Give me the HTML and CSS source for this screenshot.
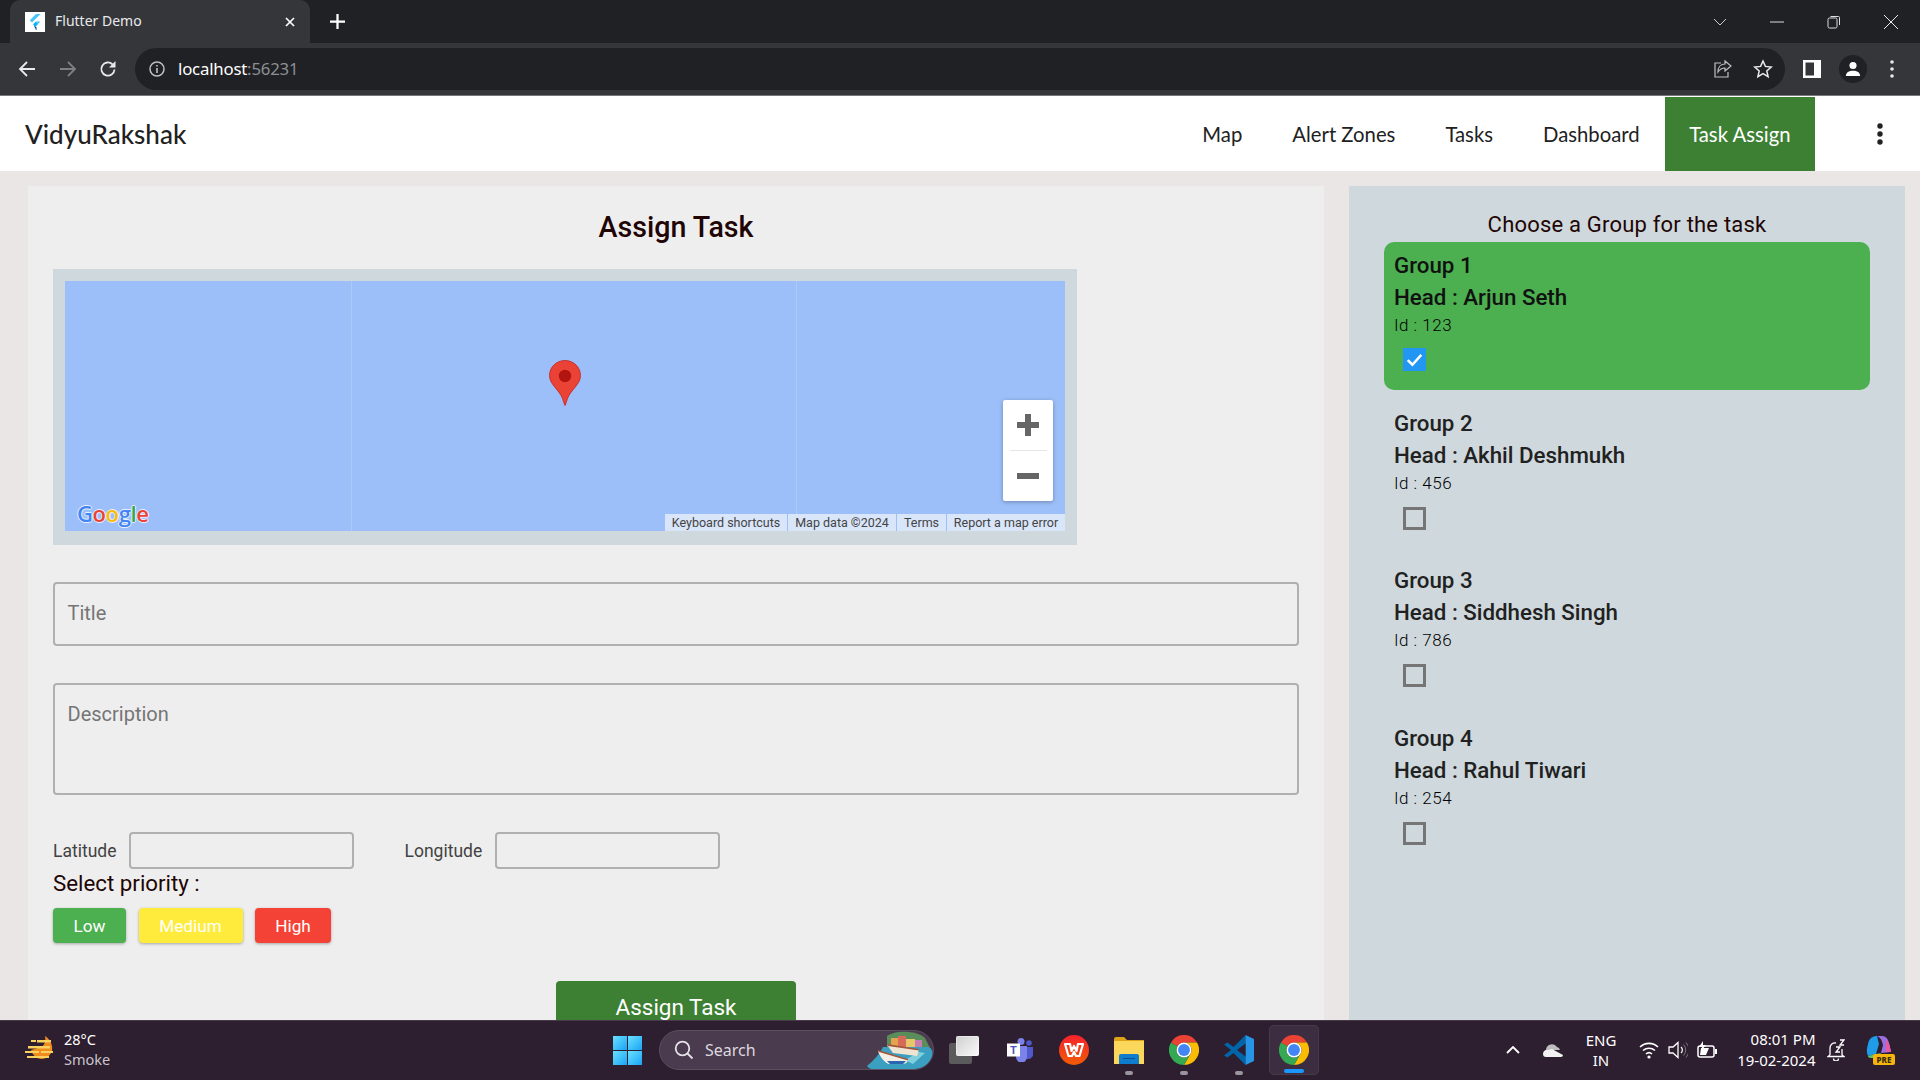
FILE: index.html
```html
<!DOCTYPE html>
<html lang="en">
<head>
  <meta charset="UTF-8">
  <meta name="viewport" content="width=device-width, initial-scale=1.0">
  <title>Flutter Demo</title>
  <link rel="stylesheet" href="styles.css">
</head>
<body>

<svg class="defs" width="0" height="0">
  <symbol id="chrome" viewBox="0 0 48 48">
    <path fill="#ea4335" d="M3.2 12A24 24 0 0 1 44.8 12H24A12 12 0 0 0 13.6 18Z"/>
    <path fill="#fbbc04" d="M44.8 12A24 24 0 0 1 24 48L34.4 30A12 12 0 0 0 24 12Z"/>
    <path fill="#34a853" d="M24 48A24 24 0 0 1 3.2 12L13.6 18A12 12 0 0 0 34.4 30Z"/>
    <circle cx="24" cy="24" r="12" fill="#fff"/>
    <circle cx="24" cy="24" r="9.5" fill="#4285f4"/>
  </symbol>
</svg>

<!-- browser window -->
<div class="tabstrip">
  <div class="tab">
    <svg class="favicon" viewBox="0 0 20 20">
      <rect width="20" height="20" fill="#fff"/>
      <path fill="#47c5fb" d="M11 2h4.500L7 10.500 4.800 8.300z"/>
      <path fill="#47c5fb" d="M11 9.500h4.500L10.500 14.500 8.300 12.200z"/>
      <path fill="#00569e" d="M8.300 12.200l2.200 2.200 1 1 .1 2.600H11z"/>
      <path fill="#00b5f8" d="M8.300 12.200l2.200-2.200 2.100 2.200-2.100 2.200z"/>
    </svg>
    <span class="tab-title">Flutter Demo</span>
    <svg class="tab-close" viewBox="0 0 10 10"><path d="M1 1l8 8M9 1l-8 8" stroke="#fff" stroke-width="1.700"/></svg>
  </div>
  <svg class="new-tab" viewBox="0 0 16 16"><path d="M8 0v16M0 8h16" stroke="#fff" stroke-width="2.400"/></svg>
  <div class="win-controls">
    <svg viewBox="0 0 14 14"><path d="M1 4l6 6 6-6" fill="none" stroke="#ccc"/></svg>
    <svg viewBox="0 0 14 14"><path d="M0 7h14" stroke="#ddd"/></svg>
    <svg viewBox="0 0 14 14"><rect x="1" y="3" width="9" height="10" rx="1.500" fill="none" stroke="#ddd"/><path d="M3.500 1.500h8a1 1 0 0 1 1 1V10" fill="none" stroke="#ddd"/></svg>
    <svg viewBox="0 0 14 14"><path d="M0 0l14 14M14 0L0 14" stroke="#eee"/></svg>
  </div>
</div>

<div class="toolbar">
  <svg class="tool-icon" viewBox="0 0 18 18"><path d="M17 9H2M9 2L2 9l7 7" fill="none" stroke="#e8eaed" stroke-width="1.800"/></svg>
  <svg class="tool-icon" viewBox="0 0 18 18"><path d="M1 9h15M9 2l7 7-7 7" fill="none" stroke="#7d7f83" stroke-width="1.800"/></svg>
  <svg class="tool-icon" viewBox="0 0 18 18"><path d="M15.500 9.500a6.600 6.600 0 1 1-2-5.200" fill="none" stroke="#e8eaed" stroke-width="1.800"/><path d="M16.500 1v6.500H10z" fill="#e8eaed"/></svg>
  <div class="omnibox">
    <svg class="info" viewBox="0 0 16 16"><circle cx="8" cy="8" r="7" fill="none" stroke="#bdc1c6" stroke-width="1.500"/><path d="M8 7v5M8 4v1.600" stroke="#bdc1c6" stroke-width="1.600"/></svg>
    <span class="url">localhost<span class="url-port">:56231</span></span>
    <svg class="omni-icon share" viewBox="0 0 20 20"><path d="M8 4H2v14h13v-5" fill="none" stroke="#bdc1c6" stroke-width="1.200"/><path d="M12 2l6 5-6 5V9c-3 0-5 1-7 4 0-5 3-8 7-8z" fill="none" stroke="#bdc1c6" stroke-width="1.200"/></svg>
    <svg class="omni-icon" viewBox="0 0 20 20"><path d="M10 2l2.400 5.400 5.800.6-4.400 3.900 1.300 5.800L10 14.700l-5.100 3 1.300-5.800L1.800 8l5.800-.6z" fill="none" stroke="#e8eaed" stroke-width="1.500"/></svg>
  </div>
  <svg class="panel-icon" viewBox="0 0 18 18"><path fill="#fff" fill-rule="evenodd" d="M0 0h18v18H0zM2.500 2.500v13H11v-13z"/></svg>
  <div class="profile">
    <svg viewBox="0 0 18 18"><circle cx="9" cy="5" r="4" fill="#fff"/><path fill="#fff" d="M1 17c0-4 3.500-6 8-6s8 2 8 6z"/></svg>
  </div>
  <svg class="chrome-menu" viewBox="0 0 4 18"><circle cx="2" cy="2" r="1.800" fill="#e8eaed"/><circle cx="2" cy="9" r="1.800" fill="#e8eaed"/><circle cx="2" cy="16" r="1.800" fill="#e8eaed"/></svg>
</div>

<!-- flutter app -->
<header class="appbar">
  <div class="brand">VidyuRakshak</div>
  <nav class="nav">
    <a class="nav-item">Map</a>
    <a class="nav-item">Alert Zones</a>
    <a class="nav-item">Tasks</a>
    <a class="nav-item">Dashboard</a>
    <a class="nav-item active">Task Assign</a>
  </nav>
  <svg class="kebab" viewBox="0 0 6 22"><circle cx="3" cy="3" r="2.700" fill="#212121"/><circle cx="3" cy="11" r="2.700" fill="#212121"/><circle cx="3" cy="19" r="2.700" fill="#212121"/></svg>
</header>

<main class="page">
  <section class="form-panel">
    <h1 class="form-title">Assign Task</h1>

    <div class="map-frame">
      <div class="map">
        <span class="map-seam seam-a"></span>
        <span class="map-seam seam-b"></span>
        <svg class="pin" viewBox="0 0 32 46">
          <path fill="#ea4335" stroke="#c5221f" stroke-width=".8" d="M16 .5C7.500.5.500 7 .5 15.500c0 9 9.500 14 13 23 .8 2 1.200 4.500 2.500 7 1.300-2.500 1.700-5 2.500-7 3.500-9 13-14 13-23C31.500 7 24.500.5 16 .5z"/>
          <circle cx="16" cy="16" r="6.200" fill="#b3140f"/>
        </svg>
        <div class="zoom-ctl">
          <svg class="zoom-btn" viewBox="0 0 22 22"><path d="M11 0v22M0 11h22" stroke="#666" stroke-width="6"/></svg>
          <span class="zoom-sep"></span>
          <svg class="zoom-btn" viewBox="0 0 22 22"><path d="M0 11h22" stroke="#666" stroke-width="6"/></svg>
        </div>
        <div class="google-logo"><span class="g-blue">G</span><span class="g-red">o</span><span class="g-yellow">o</span><span class="g-blue">g</span><span class="g-green">l</span><span class="g-red">e</span></div>
        <div class="map-credits">
          <span class="credit credit-keys">Keyboard shortcuts</span>
          <span class="credit credit-data">Map data ©2024</span>
          <span class="credit credit-terms">Terms</span>
          <span class="credit credit-report">Report a map error</span>
        </div>
      </div>
    </div>

    <div class="field field-title">Title</div>
    <div class="field field-desc">Description</div>

    <div class="coords">
      <span class="coord-label">Latitude</span>
      <span class="coord-input"></span>
      <span class="coord-label coord-gap">Longitude</span>
      <span class="coord-input"></span>
    </div>

    <div class="priority-label">Select priority :</div>
    <div class="priority">
      <button class="chip chip-low">Low</button>
      <button class="chip chip-medium">Medium</button>
      <button class="chip chip-high">High</button>
    </div>

    <button class="assign-btn">Assign Task</button>
  </section>

  <aside class="group-panel">
    <h2 class="group-heading">Choose a Group for the task</h2>

    <div class="group selected">
      <div class="group-name">Group 1</div>
      <div class="group-head">Head : Arjun Seth</div>
      <div class="group-id">Id : 123</div>
      <span class="check checked">
        <svg viewBox="0 0 22 22"><path d="M4.500 11.500l4.500 4.500 8.500-9.500" fill="none" stroke="#fff" stroke-width="2.400"/></svg>
      </span>
    </div>
    <div class="group">
      <div class="group-name">Group 2</div>
      <div class="group-head">Head : Akhil Deshmukh</div>
      <div class="group-id">Id : 456</div>
      <span class="check"></span>
    </div>
    <div class="group">
      <div class="group-name">Group 3</div>
      <div class="group-head">Head : Siddhesh Singh</div>
      <div class="group-id">Id : 786</div>
      <span class="check"></span>
    </div>
    <div class="group">
      <div class="group-name">Group 4</div>
      <div class="group-head">Head : Rahul Tiwari</div>
      <div class="group-id">Id : 254</div>
      <span class="check"></span>
    </div>
  </aside>
</main>

<!-- windows taskbar -->
<footer class="taskbar">
  <div class="weather">
    <svg class="weather-icon" viewBox="0 0 30 28">
      <path fill="#f08c1e" d="M6 14a11 12 0 0 0 21 1c1-5-1-11-7-15 1 4 0 8-3 11z"/>
      <path fill="#f7d25e" d="M6 4h5v2H6zM12 4h14v2.500H12zM3 10h22v2.500H3zM0 15h14v2H0zM16 15h12v2H16zM2 20h22v2H2z"/>
    </svg>
    <div class="weather-text">
      <div>28°C</div>
      <div class="weather-sub">Smoke</div>
    </div>
  </div>

  <div class="dock">
    <div class="win-logo"><i></i><i></i><i></i><i></i></div>
    <div class="search">
      <svg class="search-icon" viewBox="0 0 20 20"><circle cx="8.500" cy="8.500" r="6.800" fill="none" stroke="#e6e3e8" stroke-width="1.800"/><path d="M13.500 13.500l5 5" stroke="#e6e3e8" stroke-width="1.800"/></svg>
      <span class="search-text">Search</span>
      <svg class="search-art" viewBox="0 0 66 40">
        <path fill="#5a8d5a" d="M20 6c8-6 30-6 38 2l6 12H20z"/>
        <path fill="#e8a24f" d="M24 8h7v10h-7z"/><path fill="#d86a5a" d="M31 6h8v12h-8z"/><path fill="#e8c76a" d="M39 9h9v9h-9z"/><path fill="#c77dae" d="M48 10h7v8h-7z"/>
        <path fill="#3a9fc0" d="M16 17h44c6 0 7 8 4 13-3 7-8 10-14 10H10c-5 0-9-2-10-4 5-4 12-11 16-19z"/>
        <path fill="#7fd0dc" d="M38 30l14-8 6 1-12 11z"/>
        <path fill="#f4efe6" d="M11 21l30 9c-1 3-3 4-6 4H22c-4-1-9-7-11-13z"/>
        <path fill="#a5553a" d="M11 20l30 9v1.500L12 22z"/>
        <path fill="#2c66b0" d="M20 31h19l-3 3H23z"/>
        <path fill="#efe3d2" d="M20 15l32 5-2 6-24-3z"/>
        <path fill="#a5553a" d="M20 14l32 5v1.500L21 16z"/>
      </svg>
    </div>
    <div class="task-windows">
      <span class="tw-back"></span>
      <span class="tw-front"></span>
    </div>
    <svg class="dock-icon teams" viewBox="0 0 26 24">
      <circle cx="14" cy="3.500" r="3.500" fill="#7b83eb"/><circle cx="22" cy="5" r="2.800" fill="#5059c9"/>
      <path fill="#5059c9" d="M18 9h8v8a5 5 0 0 1-8 3z"/>
      <path fill="#7b83eb" d="M9 8h11v11a5.500 5.500 0 0 1-11 0z"/>
      <rect y="5.500" width="13" height="13" fill="#fff"/>
      <text class="teams-t" x="6.500" y="16">T</text>
    </svg>
    <div class="dock-slot">
      <svg class="dock-icon" viewBox="0 0 30 30">
        <defs><linearGradient id="wpsg" x1="0" y1="0" x2="0" y2="1"><stop offset="0" stop-color="#f5222d"/><stop offset="1" stop-color="#f25c05"/></linearGradient></defs>
        <circle cx="15" cy="15" r="15" fill="url(#wpsg)"/>
        <path fill="none" stroke="#fff" stroke-width="2.200" stroke-linejoin="round" d="M6 9h5l1.500 7L15 11l2.500 5L19 9h5l-3.500 12h-3.500L15 17l-2 4H9.500z"/>
      </svg>
    </div>
    <div class="dock-slot">
      <svg class="dock-icon folder" viewBox="0 0 30 27">
        <path fill="#e0a318" d="M0 2a2 2 0 0 1 2-2h8l3 3h17v6H0z"/>
        <path fill="#fbd75b" d="M0 4h30v23H0z"/>
        <path fill="#0f7dce" d="M5 19a2 2 0 0 1 2-2h16a2 2 0 0 1 2 2v8H5z"/>
        <path fill="#0a4f8c" d="M9 21h12v1H9z"/>
      </svg>
      <span class="dock-dot"></span>
    </div>
    <div class="dock-slot">
      <svg class="dock-icon chrome-logo"><use href="#chrome"/></svg>
      <span class="dock-dot"></span>
    </div>
    <div class="dock-slot">
      <svg class="dock-icon" viewBox="0 0 30 30">
        <path fill="#0065a9" d="M21.500 0v30l-12-12-6 4.500L0 20.500 7 15 0 9.500l3.500-2 6 4.500z"/>
        <path fill="#2795e6" d="M21.500 0L30 4v22l-8.500 4z"/>
        <path fill="#2d1e30" d="M21.500 8.500v13L13 15z"/>
      </svg>
      <span class="dock-dot"></span>
    </div>
    <div class="dock-slot active">
      <svg class="dock-icon chrome-logo"><use href="#chrome"/></svg>
      <span class="dock-bar"></span>
    </div>
  </div>

  <div class="tray">
    <svg class="tray-chevron" viewBox="0 0 14 8"><path d="M1 7l6-6 6 6" fill="none" stroke="#fff" stroke-width="1.800"/></svg>
    <svg class="tray-cloud" viewBox="0 0 20 13">
      <path fill="#bdbdbd" d="M3 6a6 6 0 0 1 11-3 4 4 0 0 1 3 3z"/>
      <path fill="#f2f2f2" d="M0 10a4 4 0 0 1 5-4l4-1 11 6a2 2 0 0 1-2 2H3a3 3 0 0 1-3-3z"/>
    </svg>
    <div class="tray-lang"><div>ENG</div><div>IN</div></div>
    <svg class="tray-icon" viewBox="0 0 20 18"><path d="M1 6a13 13 0 0 1 18 0M4 9.500a9 9 0 0 1 12 0M7 13a4.500 4.500 0 0 1 6 0" fill="none" stroke="#fff" stroke-width="1.600"/><circle cx="10" cy="16" r="1.600" fill="#fff"/></svg>
    <svg class="tray-icon" viewBox="0 0 20 18"><path d="M1 6h4l5-4.500v15L5 12H1z" fill="none" stroke="#fff" stroke-width="1.300"/><path d="M13 6a4 4 0 0 1 0 6" fill="none" stroke="#fff" stroke-width="1.200"/><path d="M15.500 3.500a8 8 0 0 1 0 11M18 1.500a11 11 0 0 1 0 15" fill="none" stroke="#777" stroke-width="1"/></svg>
    <svg class="tray-icon" viewBox="0 0 20 18"><rect x="1" y="5" width="16" height="11" rx="2" fill="none" stroke="#fff" stroke-width="1.500"/><path d="M18 8h2v5h-2zM4 7l8 0-3 7H3z" fill="#fff"/><path d="M6 0L2 6h3l-1 4 5-6H6z" fill="#fff"/></svg>
    <div class="clock"><div>08:01 PM</div><div>19-02-2024</div></div>
    <svg class="tray-bell" viewBox="0 0 18 22"><path d="M3 16V9a5 5 0 0 1 6-5M15 10v6l2 1.500H1L3 16M6.500 19.500a2.500 2.500 0 0 0 5 0" fill="none" stroke="#fff" stroke-width="1.300"/><path d="M9 8h4l-4 5h4M13 1h4l-4 5h4" fill="none" stroke="#fff" stroke-width="1.300"/></svg>
    <svg class="copilot" viewBox="0 0 30 30">
      <path fill="#1e9ce8" d="M3 9c1-6 5-8 9-8l2 8-3 10-8 2C1 17 2 13 3 9z"/>
      <path fill="#9b6fe0" d="M12 1h5c4 0 6 3 7 7l2 9-10 1 2-8c-1-5-3-8-6-9z"/>
      <path fill="#e85aa0" d="M21 5c3 2 4 6 5 12h-5z"/>
      <path fill="#5fc46a" d="M3 21l8-2 5-1-3 5H6c-2 0-3-1-3-2z"/>
      <rect x="8" y="19" width="22" height="11" rx="2" fill="#f5b50a"/>
      <text class="pre" x="19" y="27.500">PRE</text>
    </svg>
  </div>
</footer>

</body>
</html>
```

FILE: styles.css
```css
* {
  box-sizing: border-box;
  margin: 0;
  padding: 0;
}

html, body {
  height: 1080px;
  overflow: hidden;
}

body {
  display: flex;
  flex-direction: column;
  background: #e9e6e5;
  font-family: Roboto, sans-serif;
}

.defs {
  position: absolute;
}

/* browser chrome */
.tabstrip {
  display: flex;
  align-items: center;
  height: 43px;
  flex: none;
  padding-left: 10px;
  background: #202124;
}

.tab {
  display: flex;
  align-items: center;
  width: 300px;
  height: 43px;
  padding: 0 15px;
  background: #35363a;
  border-radius: 10px 10px 0 0;
}

.favicon {
  width: 20px;
  height: 20px;
}

.tab-title {
  margin-left: 10px;
  padding-bottom: 2px;
  font: 14px "Noto Sans", sans-serif;
  color: #e8eaed;
}

.tab-close {
  width: 10px;
  height: 10px;
  margin-left: auto;
}

.new-tab {
  width: 15px;
  height: 15px;
  margin-left: 20px;
}

.win-controls {
  display: flex;
  gap: 43px;
  margin-left: auto;
  margin-right: 22px;
}

.win-controls svg {
  width: 14px;
  height: 14px;
}

.toolbar {
  display: flex;
  align-items: center;
  height: 53px;
  flex: none;
  padding: 0 26px 1px 18px;
  background: #35363a;
  border-bottom: 1px solid #77787c;
}

.tool-icon {
  width: 18px;
  height: 18px;
  margin-right: 22.500px;
}

.omnibox {
  display: flex;
  align-items: center;
  width: 1650px;
  height: 42px;
  margin-left: -4.500px;
  padding: 0 12px 0 14px;
  background: #202124;
  border-radius: 21px;
}

.info {
  width: 16px;
  height: 16px;
}

.url {
  margin-left: 13px;
  font: 16.800px "Noto Sans", sans-serif;
  letter-spacing: -.2px;
  color: #fff;
}

.url-port {
  color: #8b8f94;
}

.omni-icon {
  width: 20px;
  height: 20px;
  margin-left: 20px;
}

.share {
  margin-left: auto;
}

.panel-icon {
  width: 18px;
  height: 18px;
  margin-left: 18px;
}

.profile {
  display: flex;
  align-items: center;
  justify-content: center;
  width: 28px;
  height: 28px;
  margin-left: 18px;
  background: #202124;
  border-radius: 50%;
}

.profile svg {
  width: 16px;
  height: 16px;
}

.chrome-menu {
  width: 4px;
  height: 18px;
  margin-left: 23px;
}

/* app bar */
.appbar {
  display: flex;
  align-items: center;
  height: 75px;
  flex: none;
  padding-left: 25px;
  background: #fff;
}

.brand {
  font: 500 26px Lato, sans-serif;
  color: #212121;
}

.nav {
  display: flex;
  align-self: stretch;
  margin-left: auto;
}

.nav-item {
  display: flex;
  align-items: center;
  padding: 0 25px;
  font: 20.300px Lato, sans-serif;
  color: #212121;
}

.nav-item.active {
  margin-top: 1px;
  padding: 0 24.500px;
  background: #3d8033;
  color: #fff;
}

.kebab {
  width: 6px;
  height: 22px;
  margin: 0 37px 0 62px;
}

/* main */
.page {
  display: flex;
  flex: 1;
  min-height: 0;
  gap: 25px;
  padding: 15px 15px 0 28px;
  overflow: hidden;
}

.form-panel {
  display: flex;
  flex-direction: column;
  align-items: flex-start;
  width: 1296px;
  padding: 24px 25px 0;
  background: #eee;
}

.form-panel > * {
  flex: none;
}

.form-title {
  align-self: center;
  font-size: 28.600px;
  line-height: 34px;
  font-weight: 500;
  color: #210505;
}

.map-frame {
  width: 1024px;
  height: 276px;
  margin-top: 25px;
  padding: 12px;
  background: #cfd8dc;
}

.map {
  position: relative;
  height: 250px;
  overflow: hidden;
  background: #9cbff9;
}

.map-seam {
  position: absolute;
  top: 0;
  bottom: 0;
  width: 1px;
  background: #acc9f8;
}

.seam-a {
  left: 286px;
}

.seam-b {
  left: 731px;
}

.pin {
  position: absolute;
  left: 484px;
  top: 79px;
  width: 32px;
  height: 46px;
}

.zoom-ctl {
  position: absolute;
  left: 938px;
  top: 119px;
  display: flex;
  flex-direction: column;
  align-items: center;
  width: 50px;
  height: 101px;
  padding-top: 14px;
  background: #fff;
  border-radius: 2px;
  box-shadow: 0 1px 4px rgba(0, 0, 0, .3);
}

.zoom-btn {
  width: 22px;
  height: 22px;
}

.zoom-sep {
  width: 37px;
  height: 1px;
  margin: 14px 0 14px;
  background: #e6e6e6;
}

.google-logo {
  position: absolute;
  left: 12px;
  bottom: 4px;
  font: 600 22px "Open Sans", sans-serif;
  line-height: 28px;
  letter-spacing: -.4px;
  text-shadow: 1px 0 #e8effc, -1px 0 #e8effc, 0 1px #e8effc, 0 -1px #e8effc;
}

.g-blue {
  color: #4285f4;
}

.g-red {
  color: #ea4335;
}

.g-yellow {
  color: #fbbc05;
}

.g-green {
  color: #34a853;
}

.map-credits {
  position: absolute;
  right: 0;
  bottom: 0;
  display: flex;
  gap: 1px;
  height: 17px;
}

.credit {
  display: flex;
  align-items: center;
  justify-content: center;
  height: 17px;
  font-size: 12.500px;
  color: #444;
  background: #d9e5f9;
}

.credit-keys {
  width: 122px;
}

.credit-data {
  width: 108px;
}

.credit-terms {
  width: 49px;
}

.credit-report {
  width: 118px;
}

.field {
  display: flex;
  align-items: center;
  width: 1246px;
  padding: 0 12.500px 2px;
  font-size: 20px;
  color: #757575;
  border: 2px solid #b0b0b0;
  border-radius: 4px;
}

.field-title {
  height: 64px;
  margin-top: 37px;
}

.field-desc {
  align-items: flex-start;
  height: 112px;
  margin-top: 37px;
  padding-top: 17px;
}

.coords {
  display: flex;
  align-items: center;
  height: 37px;
  margin-top: 37px;
}

.coord-label {
  width: 76px;
  font-size: 17.500px;
  color: #424242;
}

.coord-gap {
  width: 90px;
  margin-left: 50.500px;
}

.coord-input {
  width: 225px;
  height: 37px;
  border: 2px solid #b0b0b0;
  border-radius: 4px;
}

.priority-label {
  height: 28px;
  font-size: 22.300px;
  line-height: 28px;
  color: #210505;
}

.priority {
  display: flex;
  gap: 12.500px;
  margin-top: 11px;
}

.chip {
  height: 35px;
  font: 400 17.200px Roboto, sans-serif;
  color: #fff;
  border: 0;
  border-radius: 4px;
  box-shadow: 0 1px 3px rgba(0, 0, 0, .3);
}

.chip-low {
  width: 73px;
  background: #4caf50;
}

.chip-medium {
  width: 104px;
  background: #ffeb3b;
}

.chip-high {
  width: 76px;
  background: #f44336;
}

.assign-btn {
  align-self: center;
  width: 240px;
  height: 52px;
  margin-top: 38px;
  font: 400 22.500px Roboto, sans-serif;
  color: #fff;
  background: #3d8033;
  border: 0;
  border-radius: 4px;
}

/* groups */
.group-panel {
  flex: 1;
  padding: 25px 35px 0;
  background: #cfd8dc;
}

.group-heading {
  font-size: 22px;
  line-height: 28px;
  font-weight: 400;
  letter-spacing: .2px;
  text-align: center;
  color: #210505;
  margin-bottom: 3px;
}

.group {
  height: 148px;
  margin-bottom: 9.500px;
  padding: 8px 10px;
  color: #212121;
  border-radius: 10px;
}

.group.selected {
  background: #4caf50;
  color: #111;
}

.group-name, .group-head {
  font-size: 22.300px;
  line-height: 30px;
  font-weight: 500;
}

.group-head {
  margin-top: 2px;
}

.group-id {
  font-size: 17px;
  line-height: 27px;
  font-weight: 300;
  letter-spacing: .5px;
  color: #000;
}

.check {
  display: block;
  width: 23px;
  height: 23px;
  margin: 10px 0 0 9px;
  border: 3px solid #757575;
}

.check.checked {
  margin-top: 9px;
  padding: 0;
  background: #2196f3;
  border: 0;
}

.check svg {
  display: block;
  width: 23px;
  height: 23px;
}

/* taskbar */
.taskbar {
  display: flex;
  align-items: center;
  height: 60px;
  flex: none;
  padding: 0 0 1px 25px;
  color: #fff;
  background: #2d1e30;
  border-top: 1px solid #463a48;
  font-family: "Noto Sans", sans-serif;
}

.weather {
  display: flex;
  align-items: center;
  gap: 9px;
  width: 588px;
}

.weather-icon {
  width: 30px;
  height: 28px;
}

.weather-text {
  padding-bottom: 2px;
  font-size: 14.500px;
  line-height: 20px;
}

.weather-sub {
  color: #c9c4cb;
}

.dock {
  display: flex;
  align-items: center;
}

.win-logo {
  display: grid;
  grid-template-columns: 14px 14px;
  grid-auto-rows: 14px;
  gap: 1px;
  width: 29px;
}

.win-logo i {
  display: block;
  background: linear-gradient(135deg, #6be0ff, #19a4f5);
}

.search {
  position: relative;
  display: flex;
  align-items: center;
  width: 275px;
  height: 40px;
  margin-left: 17px;
  padding-left: 14px;
  background: #4a3b4e;
  border: 1px solid #5b4e5f;
  border-radius: 20px;
  overflow: hidden;
}

.search-icon {
  width: 20px;
  height: 20px;
}

.search-text {
  margin-left: 11px;
  font-size: 16px;
  color: #ddd8df;
}

.search-art {
  position: absolute;
  right: 0;
  top: -1px;
  width: 66px;
  height: 40px;
}

.task-windows {
  position: relative;
  width: 30px;
  height: 28px;
  margin-left: 15px;
}

.tw-back {
  position: absolute;
  left: 0;
  bottom: 0;
  width: 23px;
  height: 21px;
  background: #5b5a5c;
  border-radius: 2px;
}

.tw-front {
  position: absolute;
  right: 0;
  top: 0;
  width: 23px;
  height: 20px;
  background: linear-gradient(135deg, #cfcfcf, #fafafa);
  border-radius: 2px;
  box-shadow: inset 0 0 0 1px rgba(255, 255, 255, .4);
}

.dock-icon {
  display: block;
  width: 30px;
  height: 30px;
}

.teams {
  width: 26px;
  height: 24px;
  margin: 0 16px 0 28px;
}

.teams-t {
  font: 700 11px Roboto, sans-serif;
  fill: #4b53bc;
  text-anchor: middle;
}

.dock-slot {
  position: relative;
  display: flex;
  align-items: center;
  justify-content: center;
  width: 50px;
  height: 50px;
  margin-right: 5px;
  border-radius: 5px;
}

.dock-slot.active {
  background: #3c2e40;
  box-shadow: inset 0 0 0 1px #463a4a;
}

.folder {
  height: 27px;
}

.dock-dot {
  position: absolute;
  left: 21px;
  bottom: 0;
  width: 8px;
  height: 4px;
  background: #9a949c;
  border-radius: 2px;
}

.dock-bar {
  position: absolute;
  left: 15px;
  bottom: 2px;
  width: 20px;
  height: 4px;
  background: #1a98ff;
  border-radius: 2px;
}

.tray {
  display: flex;
  align-items: center;
  flex: 1;
  padding-left: 182px;
}

.tray-chevron {
  width: 14px;
  height: 8px;
}

.tray-cloud {
  width: 20px;
  height: 13px;
  margin-left: 23px;
}

.tray-lang {
  width: 40px;
  margin-left: 18px;
  font-size: 15px;
  line-height: 20px;
  text-align: center;
}

.tray-icon {
  width: 20px;
  height: 18px;
  margin-right: 9px;
}

.tray-lang + .tray-icon {
  margin-left: 18px;
}

.clock {
  width: 89.500px;
  font-size: 15px;
  line-height: 21px;
  text-align: right;
}

.tray-bell {
  width: 18px;
  height: 22px;
  margin-left: 11px;
}

.copilot {
  width: 30px;
  height: 30px;
  margin-left: 20px;
}

.pre {
  font: 800 8px "Noto Sans", sans-serif;
  fill: #3a2a10;
  text-anchor: middle;
}
```
